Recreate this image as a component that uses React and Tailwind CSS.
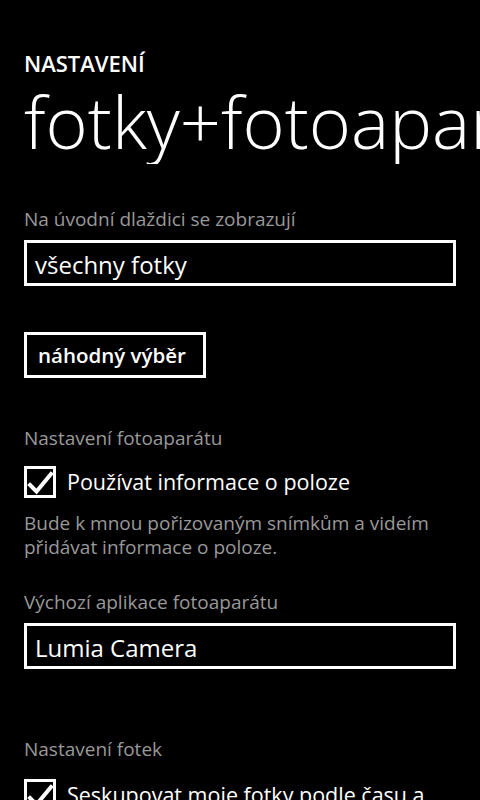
import React from 'react';

const Label = ({ children, className = '' }) => (
    <div className={`text-[19px] leading-[24px] text-[#999999] ${className}`}>{children}</div>
);

const Picker = ({ value, className = '' }) => (
    <div className={`h-[46px] border-[3px] border-white overflow-hidden px-[8px] text-[24px] leading-[44px] text-white whitespace-nowrap ${className}`}>
        {value}
    </div>
);

const CheckBox = ({ label, className = '' }) => (
    <div className={`flex items-center h-[32px] ${className}`}>
        <div className="w-[32px] h-[32px] shrink-0 border-[3px] border-white">
            <svg width="26" height="26" viewBox="0 0 26 26">
                <polyline points="3,16 9.5,22.5 24,5" fill="none" stroke="white" strokeWidth="4" strokeLinecap="square" />
            </svg>
        </div>
        <span className="ml-[11px] text-[21.5px] leading-[32px] text-white whitespace-nowrap">{label}</span>
    </div>
);

const App = () => {
    return (
        <div className="w-[480px] h-[800px] bg-black overflow-hidden pt-[48px] pl-[24px] pr-[24px] font-['Open_Sans',sans-serif]">
            <div className="text-[22px] leading-[30px] font-semibold text-white">NASTAVENÍ</div>
            <div className="text-[72px] leading-[86px] font-light text-white whitespace-nowrap -mr-[24px] overflow-hidden">
                fotky+fotoaparát
            </div>

            <Label className="mt-[43px]">Na úvodní dlaždici se zobrazují</Label>
            <Picker value="všechny fotky" className="mt-[9px]" />

            <button className="mt-[46px] block h-[46px] w-[182px] border-[3px] border-white text-[20.5px] leading-[40px] font-semibold text-white text-left px-[11px] whitespace-nowrap">
                náhodný výběr
            </button>

            <Label className="mt-[48px]">Nastavení fotoaparátu</Label>
            <CheckBox label="Používat informace o poloze" className="mt-[16px]" />
            <Label className="mt-[13px]">
                Bude k mnou pořizovaným snímkům a videím<br />přidávat informace o poloze.
            </Label>

            <Label className="mt-[31px]">Výchozí aplikace fotoaparátu</Label>
            <Picker value="Lumia Camera" className="mt-[9px]" />

            <Label className="mt-[68px]">Nastavení fotek</Label>
            <CheckBox label="Seskupovat moje fotky podle času a" className="mt-[18px]" />
        </div>
    );
};

export default App;
